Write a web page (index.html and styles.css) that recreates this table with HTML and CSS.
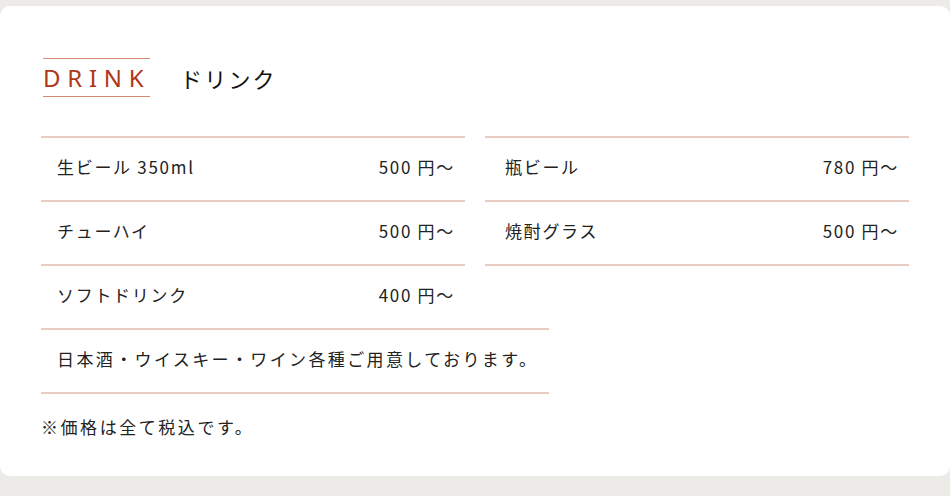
FILE: index.html
```html
<!DOCTYPE html>
<html lang="ja">
<head>
<meta charset="utf-8">
<title>ドリンク</title>
<link rel="stylesheet" href="styles.css">
</head>
<body>
<main class="page">
  <section class="card">
    <header class="head">
      <h2 class="en">DRINK</h2>
      <p class="ja">ドリンク</p>
    </header>
    <div class="menu">
      <ul class="col col-left">
        <li class="item"><span class="name">生ビール 350ml</span><span class="price">500 円〜</span></li>
        <li class="item"><span class="name">チューハイ</span><span class="price">500 円〜</span></li>
        <li class="item"><span class="name">ソフトドリンク</span><span class="price">400 円〜</span></li>
      </ul>
      <ul class="col col-right">
        <li class="item"><span class="name">瓶ビール</span><span class="price">780 円〜</span></li>
        <li class="item"><span class="name">焼酎グラス</span><span class="price">500 円〜</span></li>
      </ul>
    </div>
    <p class="extra">日本酒・ウイスキー・ワイン各種ご用意しております。</p>
    <p class="notice">※価格は全て税込です。</p>
  </section>
</main>
</body>
</html>
```
FILE: styles.css
```css
* { box-sizing: border-box; }
html, body { margin: 0; padding: 0; }
body {
  background: #edebe7;
  font-family: "Noto Sans CJK JP", "Noto Sans", sans-serif;
  color: #222;
  width: 950px;
  height: 496px;
  overflow: hidden;
}
.page { padding-top: 6px; }
.card {
  background: #fff;
  border-radius: 10px;
  height: 470px;
  padding: 52px 41px 0;
}
.head {
  display: flex;
  align-items: center;
  gap: 30px;
}
.en {
  margin: 0 0 0 2px;
  font-family: "Noto Sans", sans-serif;
  font-weight: 400;
  font-size: 24px;
  letter-spacing: 0.28em;
  line-height: 37px;
  color: #b0371a;
  border-top: 1px solid #d48a75;
  border-bottom: 1px solid #d48a75;
  padding: 0;
  width: 107px;
  white-space: nowrap;
}
.ja {
  margin: 0;
  font-size: 22px;
  letter-spacing: 0.1em;
  color: #111;
}
.menu {
  display: grid;
  grid-template-columns: 424px 424px;
  gap: 20px;
  margin-top: 39px;
  align-items: start;
}
.col { list-style: none; margin: 0; padding: 0; }
.col-right { border-bottom: 2px solid #e8ccc4; }
.item {
  display: flex;
  justify-content: space-between;
  align-items: center;
  height: 64px;
  border-top: 2px solid #e8ccc4;
  padding: 0 10px 6px 16px;
  font-size: 17px;
  letter-spacing: 0.1em;
}
.col-right .item { padding-left: 20px; }
.extra {
  margin: 0;
  width: 508px;
  height: 66px;
  display: flex;
  align-items: center;
  padding: 0 0 6px 16px;
  font-size: 17px;
  letter-spacing: 0.14em;
  border-top: 2px solid #e8ccc4;
  border-bottom: 2px solid #e8ccc4;
}
.notice {
  margin: 20px 0 0;
  font-size: 17px;
  letter-spacing: 0.15em;
}
```
